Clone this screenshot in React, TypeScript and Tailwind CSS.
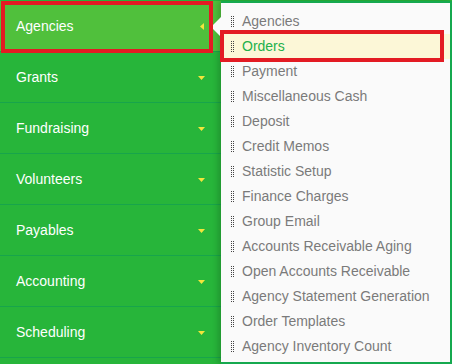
import React from "react"

const sections = [
  "Agencies",
  "Grants",
  "Fundraising",
  "Volunteers",
  "Payables",
  "Accounting",
  "Scheduling",
]

const items = [
  "Agencies",
  "Orders",
  "Payment",
  "Miscellaneous Cash",
  "Deposit",
  "Credit Memos",
  "Statistic Setup",
  "Finance Charges",
  "Group Email",
  "Accounts Receivable Aging",
  "Open Accounts Receivable",
  "Agency Statement Generation",
  "Order Templates",
  "Agency Inventory Count",
]

function Caret({ open }: { open: boolean }) {
  if (open) {
    return (
      <svg width="4" height="7" viewBox="0 0 4 7" className="mr-[1px]">
        <polygon points="4,0 0,3.5 4,7" fill="#f3e53c" />
      </svg>
    )
  }
  return (
    <svg width="7" height="4" viewBox="0 0 7 4" className="mt-[2px]">
      <polygon points="0,0 7,0 3.5,4" fill="#f3e53c" />
    </svg>
  )
}

function Handle() {
  const dots = [0, 2, 4, 6, 8, 10]
  return (
    <svg width="3" height="11" viewBox="0 0 3 11" className="shrink-0">
      {dots.map((y) => (
        <g key={y}>
          <rect x="0" y={y} width="1" height="1" fill="#444" />
          <rect x="2" y={y} width="1" height="1" fill="#444" />
        </g>
      ))}
    </svg>
  )
}

export default function App() {
  return (
    <div
      className="relative flex h-[364px] w-[452px] overflow-hidden bg-[#27b53a]"
      style={{ fontFamily: '"Liberation Sans", Arial, sans-serif' }}
    >
      {/* sidebar */}
      <div className="flex w-[221px] shrink-0 flex-col pt-px">
        {sections.map((s, i) => (
          <div
            key={s}
            className={
              "flex h-[51px] shrink-0 items-center justify-between border-b border-[#17a54b] pl-4 pr-4 text-[14px] text-white " +
              (i === 0 ? "bg-[#50c03c]" : "")
            }
          >
            <span>{s}</span>
            <Caret open={i === 0} />
          </div>
        ))}
      </div>

      {/* dropdown panel */}
      <div className="relative z-10 mt-px flex-1 border-t-2 border-r-2 border-b-2 border-[#15a94f] bg-[#fafafa] pt-[6px] shadow-[-3px_0_6px_rgba(0,0,0,0.18)]">
        <svg width="10" height="20" viewBox="0 0 10 20" className="absolute left-[-10px] top-[14px]">
          <polygon points="10,0 0,10 10,20" fill="#fafafa" />
        </svg>
        {items.map((it, i) => (
          <div
            key={it}
            className={
              "flex h-[25px] items-center gap-[8px] pl-[10px] text-[14px] " +
              (i === 1 ? "bg-[#fcf7d7] text-[#22b14b]" : "text-[#7a7a7a]")
            }
          >
            <Handle />
            <span>{it}</span>
          </div>
        ))}
      </div>

      {/* annotation boxes */}
      <div className="pointer-events-none absolute left-px top-px z-20 h-[52px] w-[212px] border-4 border-[#e31b23]" />
      <div className="pointer-events-none absolute left-[220px] top-[30px] z-20 h-[32px] w-[224px] border-4 border-[#e31b23]" />
    </div>
  )
}
